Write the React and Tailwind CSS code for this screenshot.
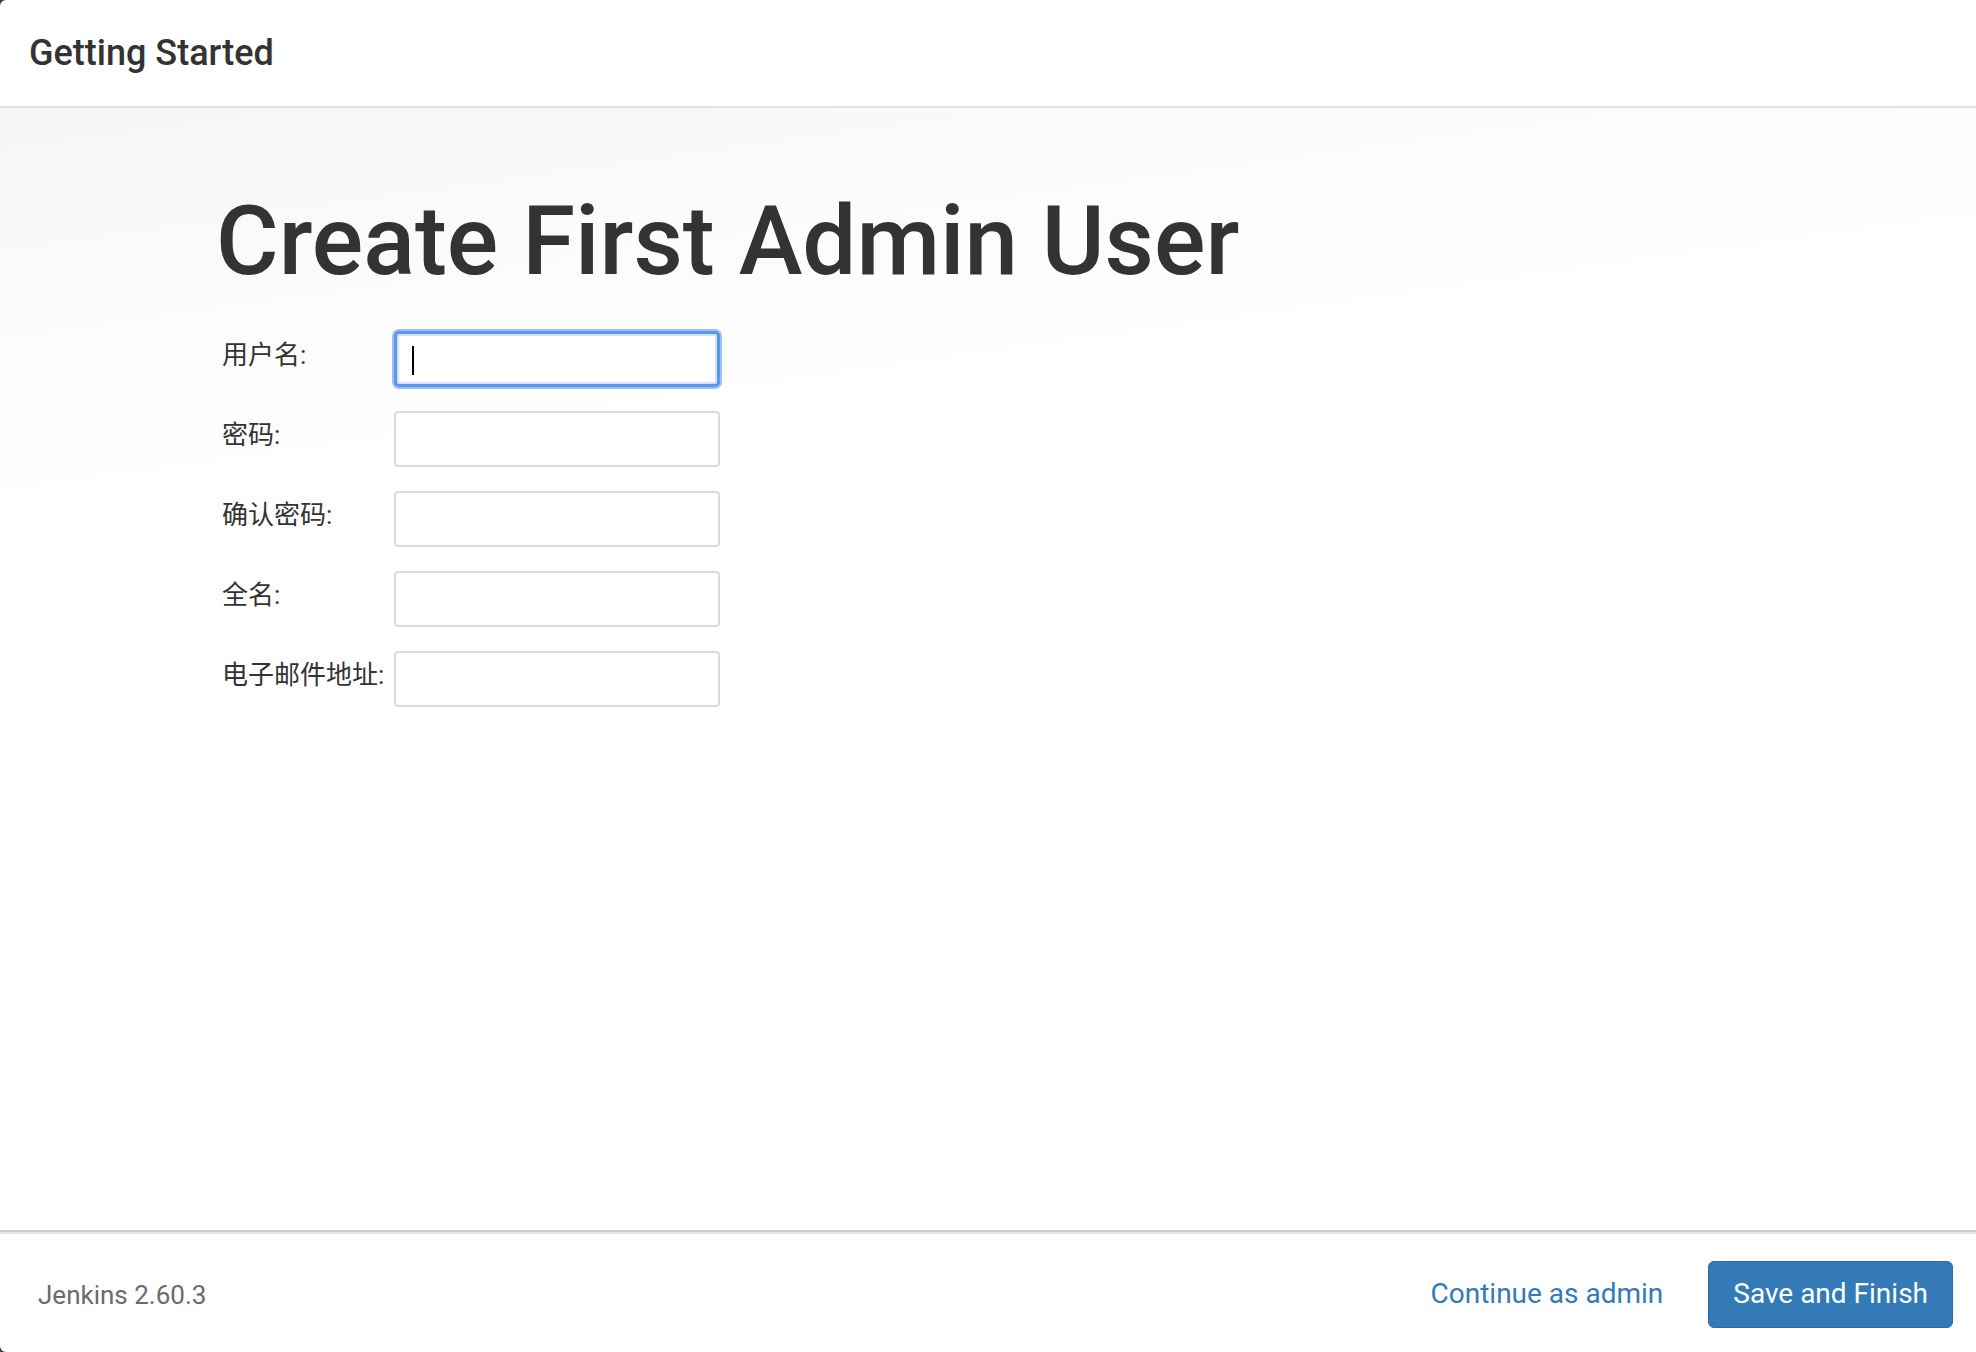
const FIELDS = [
  { label: '用户名:', type: 'text', focused: true },
  { label: '密码:', type: 'password' },
  { label: '确认密码:', type: 'password' },
  { label: '全名:', type: 'text' },
  { label: '电子邮件地址:', type: 'email' }
];

function Field({ label, type, focused }) {
  return (
    <div className="flex items-center h-[56px]">
      <label className="w-[178px] pl-[6px] pb-[8px] text-[26px] text-[#333] whitespace-nowrap font-['Roboto','Noto_Sans_CJK_SC',sans-serif]">
        {label}
      </label>
      <div className="relative">
        <input
          type={type}
          className={
            focused
              ? 'block w-[326px] h-[56px] rounded-[5px] bg-white border-[3px] border-[#5b96ec] shadow-[0_0_0_2px_#9cc0f6,inset_0_0_0_2px_#d3e3fb] outline-none'
              : 'block w-[326px] h-[56px] rounded-[4px] bg-white border-2 border-[#dadada] outline-none'
          }
        />
        {/* fake caret for the focused field */}
        {focused && <span className="absolute left-[18px] top-[15px] w-[2px] h-[29px] bg-black" />}
      </div>
    </div>
  );
}

export default function App() {
  return (
    <div className="h-[1352px] w-full bg-[#3a3a3a] font-['Roboto','Noto_Sans_CJK_SC',sans-serif]">
      <div className="h-full flex flex-col bg-white rounded-l-[6px] overflow-hidden">
        {/* Header */}
        <div className="h-[108px] shrink-0 flex items-center pl-[29px] border-b-2 border-[#e2e2e2]">
          <h4 className="text-[36px] font-medium text-[#333] leading-none">Getting Started</h4>
        </div>

        {/* Body */}
        <div className="flex-1 pl-[216px] pt-[85px] bg-[linear-gradient(172deg,#f5f5f5_0%,#fafafa_12%,#ffffff_30%)]">
          <h1 className="text-[96px] font-medium text-[#333] leading-none">Create First Admin User</h1>
          <form className="mt-[42px] flex flex-col gap-[24px]">
            {FIELDS.map((f) => (
              <Field key={f.label} {...f} />
            ))}
          </form>
        </div>

        {/* Footer */}
        <div className="h-[122px] shrink-0 flex items-center justify-between pl-[38px] pr-[23px] pt-[4px] border-t-2 border-[#cccccc] shadow-[inset_0_2px_0_#e6e6e6]">
          <span className="text-[26px] text-[#6b6b6b] pt-[2px]">Jenkins 2.60.3</span>
          <div className="flex items-center gap-[45px]">
            <a href="#" className="text-[28px] text-[#337ab7]">Continue as admin</a>
            <button className="h-[67px] px-[24px] rounded-[6px] bg-[#337ab7] border border-[#2e6da4] text-[28px] text-white">
              Save and Finish
            </button>
          </div>
        </div>
      </div>
    </div>
  );
}
